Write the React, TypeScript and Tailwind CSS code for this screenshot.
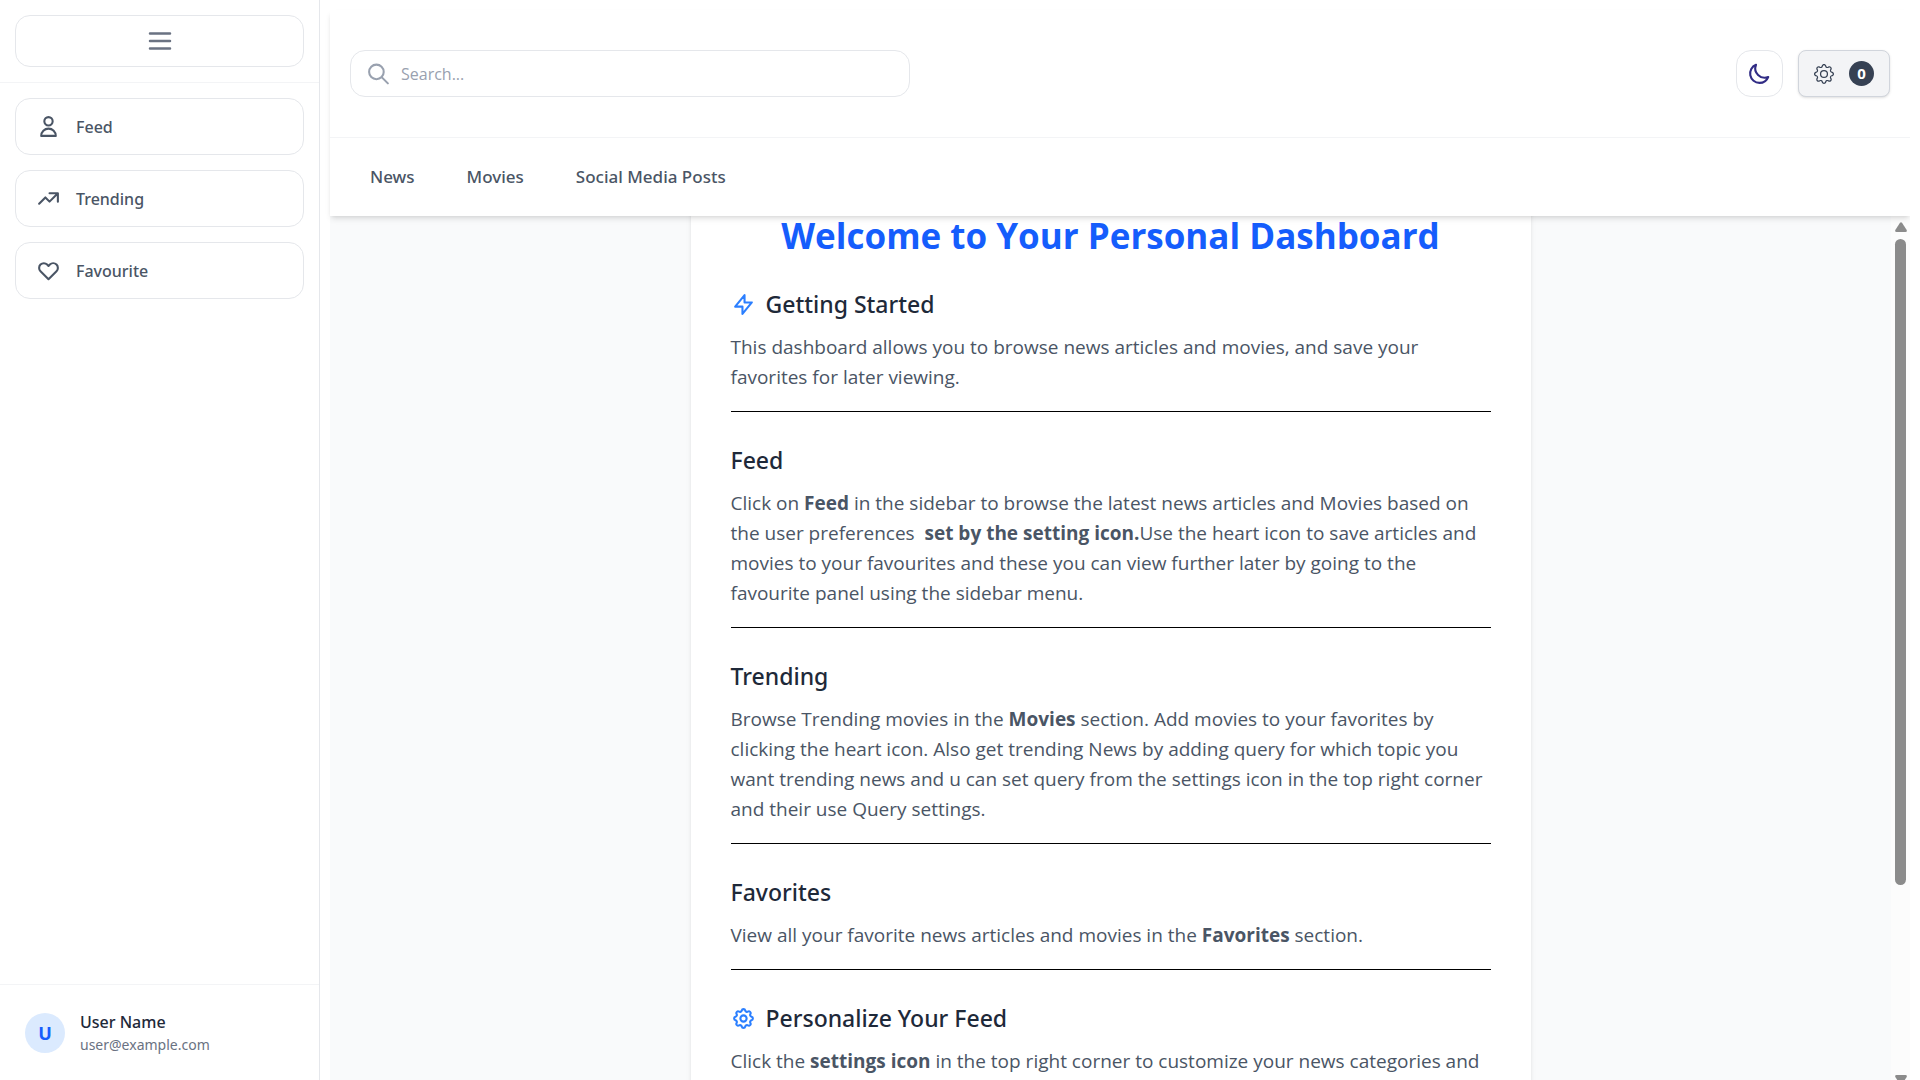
import type { ReactNode } from "react";
import {
  HiOutlineCog,
  HiOutlineHeart,
  HiOutlineLightningBolt,
  HiOutlineMenu,
  HiOutlineMoon,
  HiOutlineSearch,
  HiOutlineTrendingUp,
  HiOutlineUser,
} from "react-icons/hi";
import { BsGear } from "react-icons/bs";

const menuItems = [
  { label: "Feed", Icon: HiOutlineUser },
  { label: "Trending", Icon: HiOutlineTrendingUp },
  { label: "Favourite", Icon: HiOutlineHeart },
];

const navLinks = ["News", "Movies", "Social Media Posts"];

function Sidebar() {
  return (
    <aside className="flex w-[320px] shrink-0 flex-col border-r border-gray-200 bg-white">
      <div className="border-b border-gray-100 p-[15px]">
        <button
          type="button"
          aria-label="Toggle menu"
          className="flex h-[52px] w-full items-center justify-center rounded-[15px] border border-gray-200 text-gray-500"
        >
          <HiOutlineMenu size={30} />
        </button>
      </div>
      <nav aria-label="Sidebar" className="flex flex-1 flex-col gap-[15px] p-[15px]">
        {menuItems.map(({ label, Icon }) => (
          <button
            key={label}
            type="button"
            className="flex h-[57px] items-center gap-[15px] rounded-[15px] border border-gray-200 px-5 text-base font-medium text-gray-600"
          >
            <Icon size={25} />
            <span>{label}</span>
          </button>
        ))}
      </nav>
      <div className="flex items-center gap-[15px] border-t border-gray-100 p-[25px]">
        <div className="flex size-10 items-center justify-center rounded-full bg-blue-100 text-lg font-bold text-blue-600">
          U
        </div>
        <div>
          <p className="text-base leading-[25px] font-medium text-gray-800">User Name</p>
          <p className="text-sm leading-5 text-gray-500">user@example.com</p>
        </div>
      </div>
    </aside>
  );
}

function Header() {
  return (
    <header className="relative z-10 bg-white shadow-md">
      <div className="flex items-center justify-between border-b border-gray-100 px-5 py-10">
        <label className="relative block w-[560px]">
          <span className="sr-only">Search</span>
          <HiOutlineSearch
            size={25}
            className="pointer-events-none absolute top-1/2 left-4 -translate-y-1/2 text-gray-400"
          />
          <input
            type="text"
            placeholder="Search..."
            className="h-[47px] w-full rounded-[15px] border border-gray-200 pr-5 pl-[50px] font-['Open_Sans',sans-serif] text-base placeholder:text-gray-400"
          />
        </label>
        <div className="flex items-center gap-[15px]">
          <button
            type="button"
            aria-label="Toggle dark mode"
            className="flex size-[47px] items-center justify-center rounded-[15px] border border-gray-200 text-indigo-900"
          >
            <HiOutlineMoon size={25} />
          </button>
          <button
            type="button"
            aria-label="Settings"
            className="flex h-[47px] items-center gap-[15px] rounded-lg border border-gray-300 bg-gray-100 px-[15px] text-gray-700 shadow-sm"
          >
            <BsGear size={20} />
            <span className="flex size-[25px] items-center justify-center rounded-full bg-gray-700 text-[15px] font-bold text-white">
              0
            </span>
          </button>
        </div>
      </div>
      <nav aria-label="Sections" className="flex h-[78px] items-center gap-3 px-5">
        {navLinks.map((label) => (
          <a key={label} href="#" className="px-5 text-[17px] font-medium text-gray-600">
            {label}
          </a>
        ))}
      </nav>
    </header>
  );
}

function Section({ title, icon, children }: { title: string; icon?: ReactNode; children: ReactNode }) {
  return (
    <section className="mb-[31px] border-b border-black pb-[19px]">
      <h2 className="mb-[10px] flex items-center gap-[10px] text-[23px] leading-[35px] font-medium text-gray-800">
        {icon}
        {title}
      </h2>
      <p className="-mr-2 font-['Open_Sans',sans-serif] text-[19px] leading-[30px] text-gray-600">{children}</p>
    </section>
  );
}

function Scrollbar() {
  return (
    <div className="flex w-[19px] shrink-0 flex-col items-center overflow-hidden bg-[#fcfcfc] pt-[6px] text-[#8b8b8b]">
      <svg width="12" height="10" viewBox="0 0 12 10" fill="currentColor" className="shrink-0">
        <path d="M5 .8Q6-.4 7 .8L11.7 8Q12.3 10 10.5 10H1.5Q-.3 10 .3 8Z" />
      </svg>
      <div className="mt-[7px] h-[646px] w-[11px] rounded-full bg-[#8b8b8b]" />
      <svg width="12" height="10" viewBox="0 0 12 10" fill="currentColor" className="mt-auto -mb-[5px] shrink-0">
        <path d="M5 9.2Q6 10.4 7 9.2L11.7 2Q12.3 0 10.5 0H1.5Q-.3 0 .3 2Z" />
      </svg>
    </div>
  );
}

export default function App() {
  return (
    <div className="flex h-screen overflow-hidden bg-white font-['Noto_Sans',sans-serif]">
      <Sidebar />
      <div className="mr-[10px] flex min-w-0 flex-1 flex-col overflow-hidden pt-[10px] pl-[10px]">
        <Header />
        <div className="flex min-h-0 flex-1 bg-gray-50">
          <main className="min-w-0 flex-1 overflow-hidden">
            <article className="mx-auto -mt-[43px] max-w-[840px] bg-white p-10 shadow-md">
              <h1 className="mb-[29px] text-center font-['Open_Sans',sans-serif] text-[35px] leading-[45px] font-bold text-blue-600">
                Welcome to Your Personal Dashboard
              </h1>
              <Section title="Getting Started" icon={<HiOutlineLightningBolt size={25} className="text-blue-500" />}>
                This dashboard allows you to browse news articles and movies, and save your favorites for later
                viewing.
              </Section>
              <Section title="Feed">
                Click on <strong>Feed</strong> in the sidebar to browse the latest news articles and Movies based on
                the user preferences &nbsp;<strong>set by the setting icon.</strong>Use the heart icon to save
                articles and movies to your favourites and these you can view further later by going to the favourite
                panel using the sidebar menu.
              </Section>
              <Section title="Trending">
                Browse Trending movies in the <strong>Movies</strong> section. Add movies to your favorites by
                clicking the heart icon. Also get trending News by adding query for which topic you want trending
                news and u can set query from the settings icon in the top right corner and their use Query settings.
              </Section>
              <Section title="Favorites">
                View all your favorite news articles and movies in the <strong>Favorites</strong> section.
              </Section>
              <Section title="Personalize Your Feed" icon={<HiOutlineCog size={25} className="text-blue-500" />}>
                Click the <strong>settings icon</strong> in the top right corner to customize your news categories and
              </Section>
            </article>
          </main>
          <Scrollbar />
        </div>
      </div>
    </div>
  );
}
